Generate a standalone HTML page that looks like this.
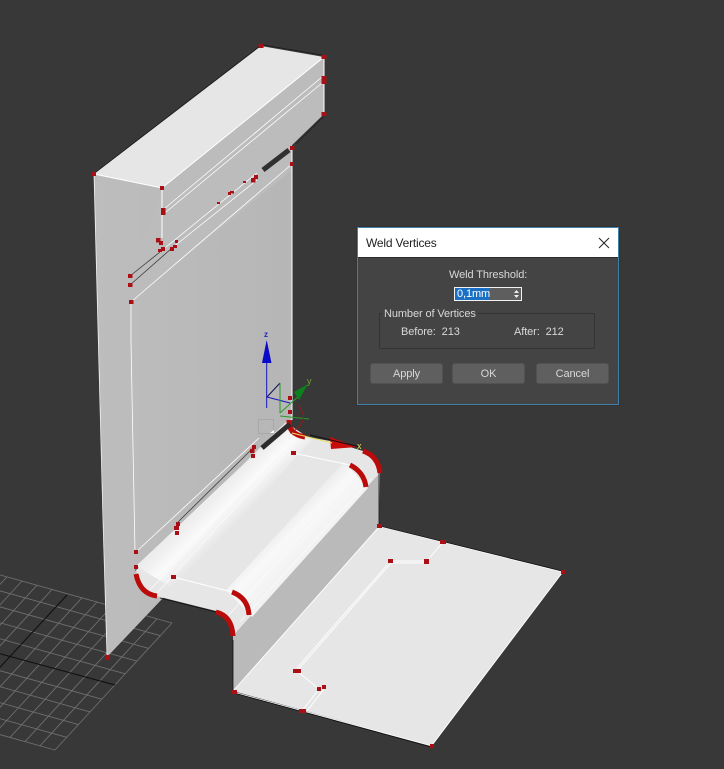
<!DOCTYPE html>
<html><head><meta charset="utf-8">
<style>
html,body{margin:0;padding:0;background:#383838;width:724px;height:769px;overflow:hidden}
#s{position:absolute;left:0;top:0;filter:blur(.35px)}
.d{position:absolute;left:357px;top:227px;width:260px;height:176px;background:#444;border:1px solid #3f7ea6;font:11px "Liberation Sans",sans-serif;color:#d8d8d8;letter-spacing:-.1px;box-shadow:0 0 1px #222}
.t{position:absolute;left:0;top:0;width:260px;height:29px;background:#fff;color:#222;font-size:12px;line-height:30px;text-indent:8px;letter-spacing:-.2px;border-bottom:1px solid #2c2c2c}
.a{position:absolute;white-space:nowrap;line-height:14px}
.sp{position:absolute;left:96px;top:59px;width:66px;height:12px;border:1px solid #f2f2f2;background:#5e5e5e}
.sel{position:absolute;left:1px;top:0;width:34px;height:12px;background:#1b6fc4;color:#fff;line-height:13px;text-indent:1px}
.g{position:absolute;left:21px;top:85px;width:214px;height:34px;border:1px solid #333;border-radius:2px}
.b{position:absolute;top:135px;width:71px;height:19px;background:#5f5f5f;border:1px solid #525252;border-radius:3px;text-align:center;line-height:21px;color:#d8d8d8}
</style></head><body>
<svg id="s" width="724" height="769" viewBox="0 0 724 769" xmlns="http://www.w3.org/2000/svg">
<defs>
<linearGradient id="b1" gradientUnits="userSpaceOnUse" x1="136" y1="556" x2="170" y2="590">
<stop offset="0" stop-color="#e8e8e8"/><stop offset=".35" stop-color="#f0f0f0"/><stop offset=".6" stop-color="#fafafa"/><stop offset="1" stop-color="#e6e6e6"/>
</linearGradient>
<linearGradient id="b2" gradientUnits="userSpaceOnUse" x1="224" y1="572" x2="256" y2="604">
<stop offset="0" stop-color="#e6e6e6"/><stop offset=".45" stop-color="#f8f8f8"/><stop offset=".7" stop-color="#f6f6f6"/><stop offset="1" stop-color="#f2f2f2"/>
</linearGradient>
<linearGradient id="p" gradientUnits="userSpaceOnUse" x1="94" y1="0" x2="292" y2="0">
<stop offset="0" stop-color="#bdbdbd"/><stop offset="1" stop-color="#b6b6b6"/>
</linearGradient>
</defs>

<!-- grid -->
<path fill="none" stroke="#6e6e6e" stroke-width=".9" d="M172 623l-229 -64M160.3 635.7l-229 -64M148.6 648.4l-229 -64M136.9 661.1l-229 -64M125.2 673.8l-229 -64M101.8 699.2l-229 -64M90.1 711.9l-229 -64M78.4 724.6l-229 -64M66.7 737.3l-229 -64M55 750l-229 -64
M172 623l-117 127M157 618.8l-117 127M142 614.6l-117 127M127 610.4l-117 127M112 606.2l-117 127M97 602l-117 127M82 597.8l-117 127M52 589.4l-117 127M37 585.2l-117 127M22 581l-117 127M7 576.8l-117 127"/>
<path fill="none" stroke="#0e0e0e" stroke-width="1" d="M115 685L-10 651M67 595L-10 678"/>

<!-- panel -->
<polygon fill="url(#p)" points="94,174 162,188 324,57 324,114 292,145 292,420 260,452 135,570 163,598 107,657"/>
<polygon fill="#bcbcbc" points="162,188 324,57 324,114 292,145 292,170 132,300 130,280"/>
<!-- top face -->
<polygon fill="#e6e6e6" points="94,174 261,46 324,57 162,188"/>
<path fill="none" stroke="#fff" stroke-width="1" d="M94 174L162 188L324 57M324 57V114M162 188V238M292 148V420"/>
<path fill="none" stroke="#f4f4f4" stroke-width=".8" d="M94 174L103 520M103 520L107 655"/>
<path fill="none" stroke="#181818" stroke-width=".7" d="M96 172L260 46M263 45L322 55"/>

<!-- dark slot -->
<path fill="none" stroke="#303030" stroke-width="5" d="M263 170L289 150"/>
<path fill="none" stroke="#2a2a2a" stroke-width="1.5" d="M296 144L324 116"/>

<!-- wall lines -->
<path fill="none" stroke="#fff" stroke-width=".8" d="M164 209L322 77M166 212L322 83M160 252L257 173M172 248L257 180M131 302L292 164M131 302V342L135 552M136 552L259 438M136 567L240 468"/>
<path fill="none" stroke="#3a3a3a" stroke-width=".8" d="M130 276L160 252M130 285L172 248M178 522L254 447M179 530L258 452"/>

<!-- riser -->
<polygon fill="#bababa" points="233,636 380,473 379,527 233,692"/>
<!-- top of step -->
<path fill="#e6e6e6" d="M136 570Q140 594 160 597L216 611Q233 616 233 636L380 473Q378 452 363 451L330 441L297 435Q288 432 288 420Z"/>
<polygon fill="url(#b1)" points="136,566 176,590 312,440 288,424"/>
<polygon fill="url(#b2)" points="226,590 252,617 368,488 344,462"/>
<path fill="none" stroke="#fbfbfb" stroke-width=".7" d="M150 590L288 440M156 594L296 442M228 616L362 468M240 622L372 478"/>
<path fill="none" stroke="#fff" stroke-width="1" d="M173 577L232 592M293 453L350 465"/>
<path fill="none" stroke="#101010" stroke-width=".8" d="M160 598L216 612M233 640V690"/>

<!-- floor -->
<polygon fill="#e6e6e6" points="379,526 563,572 432,746 233,691"/>
<path fill="none" stroke="#fff" stroke-width=".9" d="M379 527L233 691M562 573L432 745M233 692L432 746M379 526L563 572M390 561H427M390 563H427M391 563L297 671M387 565L297 668M427 561L443 542M297 671L319 689M319 689L302 711M324 689L307 711"/>
<path fill="none" stroke="#101010" stroke-width=".8" d="M380 526L562 571M234 693L431 747M379 473V526"/>

<!-- red arcs -->
<g fill="none" stroke="#bb0a0a" stroke-width="5">
<path d="M136 574Q140 594 157 596"/>
<path d="M216 612Q232 616 233 636"/>
<path d="M232 592Q248 598 249 615"/>
<path d="M350 465Q364 472 366 487"/>
<path d="M363 451Q378 456 380 473"/>
<path d="M289 420Q288 434 305 437"/>
</g>

<!-- gizmo -->
<path fill="none" stroke="#1414c0" stroke-width="1" d="M266.700 363V408M267 397L290 403"/>
<polygon fill="#0a0ac8" points="266.700,340 262,363 271.500,363"/>
<path fill="none" stroke="#101050" stroke-width="1" d="M267 397L280 383"/>
<path fill="none" stroke="#2a9a2a" stroke-width="1" d="M280 383V413M280 413L300 395M280 416L309 419"/>
<polygon fill="#0d7f1d" points="308,384 294,392 299,400"/>
<path fill="none" stroke="#8a2020" stroke-width="1" d="M298 405Q312 422 290 433"/>
<polygon fill="#c80c0c" points="330,437 357,447 331,449"/>
<path fill="none" stroke="#e8e060" stroke-width="1" d="M292 433L332 443"/>
<path fill="none" stroke="#101010" stroke-width="1" d="M310 435L360 447"/>
<rect x="258.500" y="419.500" width="15" height="14" fill="none" stroke="#a8a8a8"/>
<path fill="none" stroke="#2c2c2c" stroke-width="5" d="M262 448L290 424"/>
<path fill="#fff" d="M270 433l4 -3v3z"/>
<text x="264" y="337" font-family="Liberation Sans, sans-serif" font-size="8" fill="#2222c8" font-weight="bold">z</text>
<text x="307" y="384" font-family="Liberation Sans, sans-serif" font-size="9" fill="#6fa030">y</text>
<text x="357" y="449" font-family="Liberation Sans, sans-serif" font-size="9" fill="#e8e060">x</text>

<!-- vertices -->
<g fill="#a90f14">
<rect x="258.500" y="44" width="5" height="4"/><rect x="321.500" y="55" width="5" height="4"/><rect x="321.500" y="76" width="5" height="8"/><rect x="321.500" y="112" width="5" height="4"/>
<rect x="160" y="186" width="4" height="4"/><rect x="92" y="172" width="4" height="4"/><rect x="161" y="208" width="4.500" height="7"/>
<rect x="156" y="238" width="4.500" height="4.500"/><rect x="159" y="241" width="4" height="4"/><rect x="158" y="249" width="4" height="3"/><rect x="161" y="247" width="4" height="4"/><rect x="170" y="247" width="4" height="4"/><rect x="173" y="245" width="4" height="3"/><rect x="175" y="240" width="3" height="3"/>
<rect x="128" y="274" width="4.500" height="4"/><rect x="128" y="283" width="4.500" height="4"/><rect x="129" y="300" width="4.500" height="4"/>
<rect x="290" y="146" width="4.500" height="4"/><rect x="290" y="162" width="4" height="4"/>
<rect x="251" y="178" width="4.500" height="4.500"/><rect x="254" y="175" width="4" height="4"/><rect x="243" y="181" width="3" height="2"/><rect x="230" y="191" width="4" height="2.500"/><rect x="228" y="192" width="3" height="3"/><rect x="217" y="202" width="3" height="2"/>
<rect x="288" y="396" width="4" height="4"/><rect x="288" y="410" width="4" height="4"/>
<rect x="252" y="445" width="4" height="4"/><rect x="250" y="449" width="4.500" height="4"/><rect x="251" y="454" width="4" height="4"/>
<rect x="291" y="451" width="5" height="4"/>
<rect x="134" y="550" width="4" height="4"/><rect x="134" y="565" width="4" height="4"/><rect x="171" y="575" width="5" height="4"/>
<rect x="105" y="655" width="5" height="5"/>
<rect x="176" y="522" width="4" height="4"/><rect x="174" y="526" width="5" height="4"/><rect x="175" y="531" width="4" height="4"/>
<rect x="377" y="524" width="5" height="4"/><rect x="440" y="540" width="6" height="4"/><rect x="388" y="559" width="5" height="4"/><rect x="424" y="559" width="5" height="5"/>
<rect x="561" y="570" width="4" height="4"/><rect x="293" y="669" width="8" height="4"/><rect x="317" y="687" width="4" height="4"/><rect x="322" y="685" width="4" height="4"/>
<rect x="299" y="709" width="7" height="4"/><rect x="232" y="690" width="5" height="4"/><rect x="430" y="744" width="4" height="4"/>
</g>
</svg>

<div class="d">
<div class="t">Weld Vertices</div>
<svg style="position:absolute;left:240px;top:9px" width="12" height="12" viewBox="0 0 12 12"><path d="M1 1L11 11M11 1L1 11" stroke="#222" stroke-width="1" fill="none"/></svg>
<div class="a" style="left:91px;top:40px">Weld Threshold:</div>
<div class="sp"><div class="sel">0,1mm</div>
<svg style="position:absolute;left:58px;top:1px" width="7" height="10" viewBox="0 0 7 10"><path d="M3.500 1L6 4H1zM3.500 9L6 6H1z" fill="#eee"/></svg></div>
<div class="g"></div>
<div class="a" style="left:24px;top:79px;background:#444;padding:0 2px">Number of Vertices</div>
<div class="a" style="left:43px;top:97px">Before:&nbsp; 213</div>
<div class="a" style="left:156px;top:97px">After:&nbsp; 212</div>
<div class="b" style="left:12px">Apply</div>
<div class="b" style="left:94px">OK</div>
<div class="b" style="left:178px">Cancel</div>
</div>
</body></html>
